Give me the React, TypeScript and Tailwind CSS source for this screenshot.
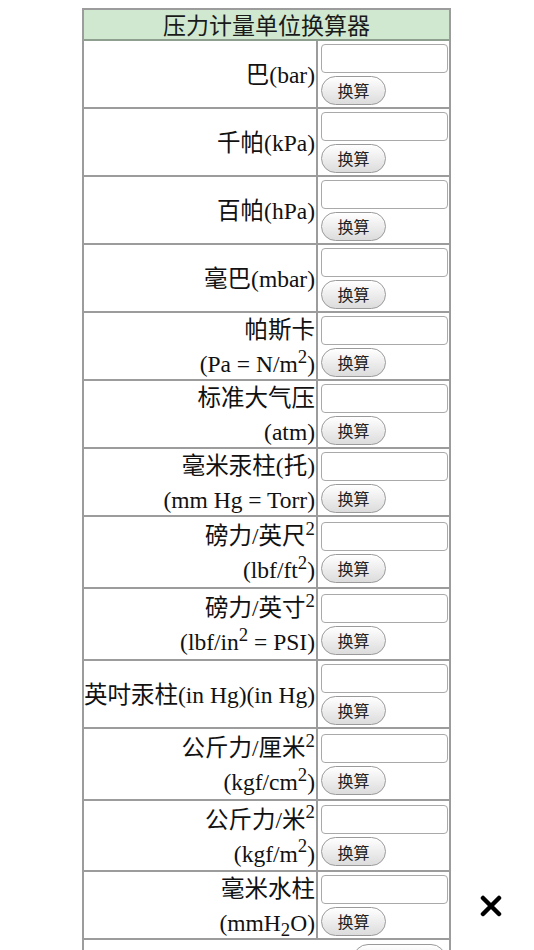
import React from 'react';

type Unit = {
  key: string;
  label: React.ReactNode;
  h: string;
};

const units: Unit[] = [
  { key: 'bar', label: <>巴(bar)</>, h: 'h-[68px]' },
  { key: 'kpa', label: <>千帕(kPa)</>, h: 'h-[68px]' },
  { key: 'hpa', label: <>百帕(hPa)</>, h: 'h-[68px]' },
  { key: 'mbar', label: <>毫巴(mbar)</>, h: 'h-[68px]' },
  {
    key: 'pa',
    label: (
      <>
        帕斯卡
        <br />
        (Pa = N/m<sup>2</sup>)
      </>
    ),
    h: 'h-[68px]',
  },
  {
    key: 'atm',
    label: (
      <>
        标准大气压
        <br />
        (atm)
      </>
    ),
    h: 'h-[68px]',
  },
  {
    key: 'torr',
    label: (
      <>
        毫米汞柱(托)
        <br />
        (mm Hg = Torr)
      </>
    ),
    h: 'h-[68px]',
  },
  {
    key: 'psf',
    label: (
      <>
        磅力/英尺<sup>2</sup>
        <br />
        (lbf/ft<sup>2</sup>)
      </>
    ),
    h: 'h-[72px]',
  },
  {
    key: 'psi',
    label: (
      <>
        磅力/英寸<sup>2</sup>
        <br />
        (lbf/in<sup>2</sup> = PSI)
      </>
    ),
    h: 'h-[72px]',
  },
  { key: 'inhg', label: <>英吋汞柱(in Hg)(in Hg)</>, h: 'h-[68px]' },
  {
    key: 'kgfcm',
    label: (
      <>
        公斤力/厘米<sup>2</sup>
        <br />
        (kgf/cm<sup>2</sup>)
      </>
    ),
    h: 'h-[72px]',
  },
  {
    key: 'kgfm',
    label: (
      <>
        公斤力/米<sup>2</sup>
        <br />
        (kgf/m<sup>2</sup>)
      </>
    ),
    h: 'h-[71px]',
  },
  {
    key: 'mmh2o',
    label: (
      <>
        毫米水柱
        <br />
        (mmH<sub>2</sub>O)
      </>
    ),
    h: 'h-[68px]',
  },
];

const font = 'font-["Liberation_Serif","Noto_Sans_CJK_SC",serif]';

function ConvertButton() {
  return (
    <button
      type="button"
      className='w-[65px] h-[29px] rounded-full border border-[#9a9a9a] bg-gradient-to-b from-white to-[#dcdcdc] text-[16px] text-[#222] leading-none font-["Noto_Sans_CJK_SC",sans-serif] shadow-[inset_0_1px_0_#fff]'
    >
      换算
    </button>
  );
}

function UnitRow({ unit }: { unit: Unit }) {
  const [value, setValue] = React.useState('');
  return (
    <div className={`flex border-b-2 border-[#9c9c9c] ${unit.h}`}>
      <div
        className={`w-[234px] shrink-0 border-r-2 border-[#9c9c9c] flex items-center justify-end pr-[1px] pt-[2px] text-right text-[23.5px] leading-[34px] text-[#111] [&_sup]:text-[80%] [&_sub]:text-[80%] ${font}`}
      >
        <div className="whitespace-nowrap">{unit.label}</div>
      </div>
      <div className="flex-1 flex flex-col justify-center gap-[3px] pl-[3px]">
        <input
          value={value}
          onChange={(e) => setValue(e.target.value)}
          className="w-[127px] h-[29px] rounded-[4px] border border-[#a9a9a9] bg-white px-1 text-[16px] outline-none"
        />
        <ConvertButton />
      </div>
    </div>
  );
}

export default function App() {
  return (
    <div className="relative min-h-[950px] bg-white overflow-hidden">
      <div className="pt-[8px] pl-[82px]">
        <div className="w-[369px] border-x-2 border-t-2 border-[#9c9c9c]">
          <div
            className='h-[31px] border-b-2 border-[#8f9f8f] bg-[#cfe8cf] flex items-center justify-center text-[23px] leading-[29px] text-[#1a1a1a] font-["Noto_Sans_CJK_SC",sans-serif]'
          >
            压力计量单位换算器
          </div>
          {units.map((u) => (
            <UnitRow key={u.key} unit={u} />
          ))}
          <div className="h-[40px] flex justify-end items-start pt-[4px] pr-[3px]">
            <div className="w-[93px] h-[30px] rounded-full border border-[#9a9a9a] bg-gradient-to-b from-white to-[#dcdcdc]" />
          </div>
        </div>
      </div>
      <button
        type="button"
        aria-label="close"
        className="absolute left-[479px] top-[894px] w-[24px] h-[24px] flex items-center justify-center"
      >
        <svg width="22" height="22" viewBox="0 0 22 22">
          <path d="M3 3 L19 19 M19 3 L3 19" stroke="#000" strokeWidth="4.5" strokeLinecap="round" />
        </svg>
      </button>
    </div>
  );
}
